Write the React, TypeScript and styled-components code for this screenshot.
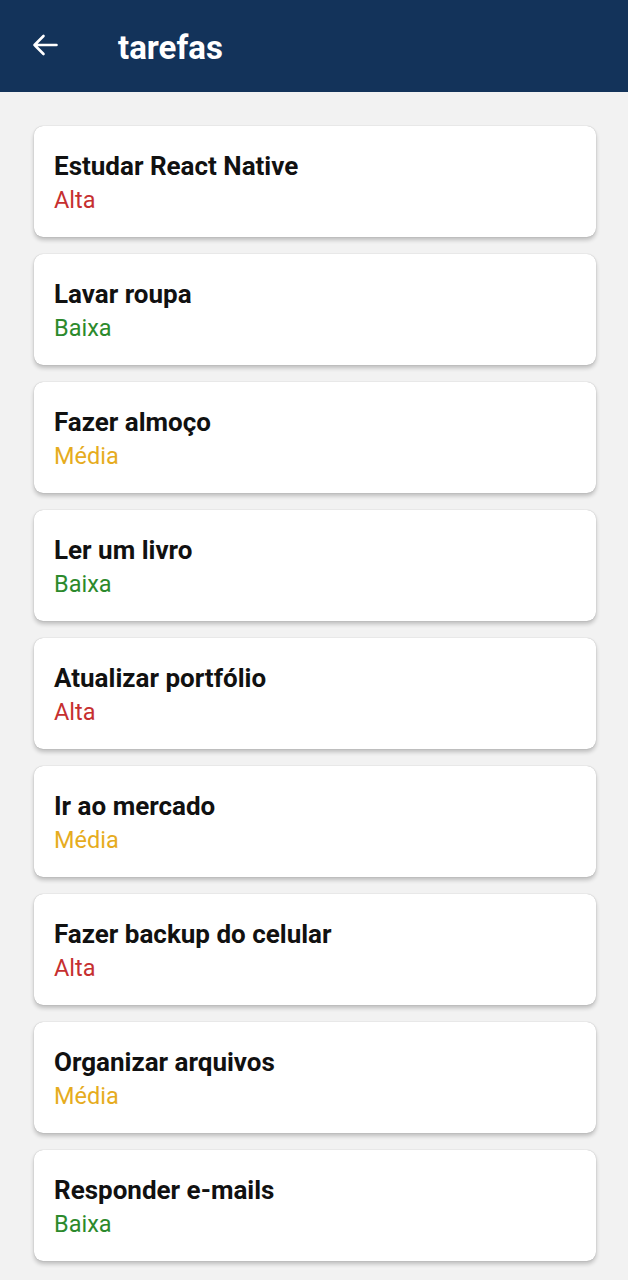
import React from "react";
import styled, { createGlobalStyle } from "styled-components";

const Global = createGlobalStyle`
  html, body { margin: 0; padding: 0; background: #f2f2f2; }
  body { font-family: Roboto, "Noto Sans", Arial, sans-serif; }
`;

const Page = styled.div`
  width: 628px;
  height: 1280px;
  background: #f2f2f2;
  overflow: hidden;
`;

const Header = styled.header`
  height: 92px;
  background: #13335a;
  display: flex;
  align-items: center;
  padding-left: 32px;
  box-sizing: border-box;
  gap: 60px;
`;

const BackButton = styled.button`
  border: none;
  background: transparent;
  padding: 0;
  width: 26px;
  height: 24px;
  display: flex;
  align-items: center;
  justify-content: center;
  color: #fff;
  margin-top: -2px;
`;

const Title = styled.h1`
  margin: 0;
  color: #fff;
  font-size: 33px;
  font-weight: 700;
  margin-top: 2px;
`;

const List = styled.main`
  display: flex;
  flex-direction: column;
  gap: 17px;
  padding: 34px 32px 0 34px;
`;

const Card = styled.div`
  background: #fff;
  border-radius: 9px;
  height: 111px;
  box-sizing: border-box;
  padding: 22px 20px 0 20px;
  box-shadow: 0 3px 4px rgba(0, 0, 0, 0.22), 0 0 1px rgba(0, 0, 0, 0.3);
  display: flex;
  flex-direction: column;
`;

const TaskName = styled.div`
  font-size: 26px;
  font-weight: 700;
  color: #111;
  line-height: 36px;
`;

const colors: Record<string, string> = {
  Alta: "#c62f2f",
  Baixa: "#2c8a2c",
  "Média": "#e6ac1e",
};

const Priority = styled.div<{ $level: string }>`
  font-size: 23.5px;
  line-height: 32px;
  color: ${(p) => colors[p.$level]};
`;

const tasks: [string, string][] = [
  ["Estudar React Native", "Alta"],
  ["Lavar roupa", "Baixa"],
  ["Fazer almoço", "Média"],
  ["Ler um livro", "Baixa"],
  ["Atualizar portfólio", "Alta"],
  ["Ir ao mercado", "Média"],
  ["Fazer backup do celular", "Alta"],
  ["Organizar arquivos", "Média"],
  ["Responder e-mails", "Baixa"],
];

export default function App() {
  return (
    <Page>
      <Global />
      <Header>
        <BackButton aria-label="voltar">
          <svg width="26" height="22" viewBox="0 0 26 22" fill="none">
            <path
              d="M24.5 11H2.5M11.5 2L2.5 11L11.5 20"
              stroke="#fff"
              strokeWidth="2.6"
              strokeLinecap="round"
              strokeLinejoin="round"
            />
          </svg>
        </BackButton>
        <Title>tarefas</Title>
      </Header>
      <List>
        {tasks.map(([name, level]) => (
          <Card key={name}>
            <TaskName>{name}</TaskName>
            <Priority $level={level}>{level}</Priority>
          </Card>
        ))}
      </List>
    </Page>
  );
}
